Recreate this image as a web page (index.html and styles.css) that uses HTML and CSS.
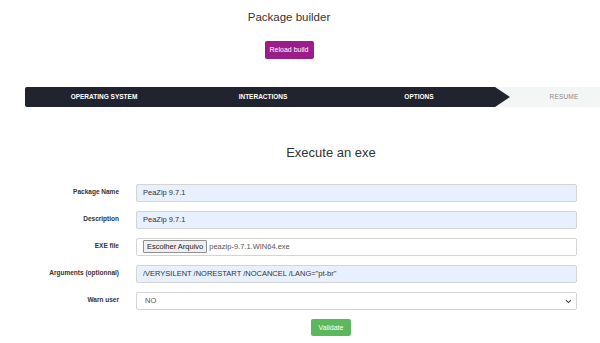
FILE: index.html
```html
<!DOCTYPE html>
<html lang="en">
<head>
  <meta charset="UTF-8">
  <meta name="viewport" content="width=device-width, initial-scale=1.0">
  <title>Package builder</title>
  <link rel="stylesheet" href="styles.css">
</head>
<body>
  <!-- header -->
  <header class="page-head">
    <h1>Package builder</h1>
    <button class="btn btn-reload" type="button">Reload build</button>
  </header>

  <!-- steps -->
  <ol class="steps">
    <li class="step done">OPERATING SYSTEM</li>
    <li class="step done">INTERACTIONS</li>
    <li class="step done last">OPTIONS</li>
    <li class="step todo">RESUME</li>
  </ol>

  <!-- form -->
  <main class="form-section">
    <h2 class="shifted">Execute an exe</h2>
    <form class="form-grid">
      <label for="pkg-name">Package Name</label>
      <input id="pkg-name" class="field filled" type="text" value="PeaZip 9.7.1">

      <label for="pkg-desc">Description</label>
      <input id="pkg-desc" class="field filled" type="text" value="PeaZip 9.7.1">

      <label>EXE file</label>
      <div class="field file-field">
        <span class="file-btn">Escolher Arquivo</span>
        <span class="file-name">peazip-9.7.1.WIN64.exe</span>
      </div>

      <label for="pkg-args">Arguments (optionnal)</label>
      <input id="pkg-args" class="field filled" type="text" value='/VERYSILENT /NORESTART /NOCANCEL /LANG="pt-br"'>

      <label for="warn">Warn user</label>
      <div class="select-wrap">
        <select id="warn" class="field">
          <option>NO</option>
          <option>YES</option>
        </select>
        <svg class="chevron" width="7" height="5" viewBox="0 0 7 5" aria-hidden="true">
          <path d="M1 1.2 L3.5 3.6 L6 1.2" fill="none" stroke="#444" stroke-width="1.1"/>
        </svg>
      </div>
    </form>
    <div class="shifted">
      <button class="btn btn-validate" type="button">Validate</button>
    </div>
  </main>
</body>
</html>
```

FILE: styles.css
```css
/* global */
body {
  font-family: "Liberation Sans", Arial, sans-serif;
  margin: 0;
  padding: 0;
  color: #333;
  background-color: #fff;
}

/* header */
.page-head {
  text-align: center;
  padding: 10px 22px 0 0;
}
.page-head h1 {
  font-size: 11.5px;
  font-weight: normal;
  line-height: 14px;
  margin: 0 0 14px;
}
.btn {
  font-family: inherit;
  border: none;
  border-radius: 2px;
  color: #fff;
  cursor: pointer;
  padding: 0;
}
.btn-reload {
  background-color: #9b1d89;
  font-size: 7px;
  width: 49px;
  height: 18px;
}

/* steps */
.steps {
  list-style: none;
  display: flex;
  margin: 28px 0 0 25px;
  padding: 0;
  height: 20px;
  background-color: #f4f5f5;
}
.step {
  display: flex;
  align-items: center;
  justify-content: center;
  font-size: 6.5px;
  font-weight: bold;
}
.step.done {
  background-color: #21232f;
  color: #fff;
  width: 160px;
}
.step.done:first-child {
  width: 158px;
  border-radius: 2px 0 0 2px;
}
.step.last {
  width: 152px;
  position: relative;
}
.step.last::after {
  content: "";
  position: absolute;
  top: 0;
  right: -15px;
  border-style: solid;
  border-width: 10px 0 10px 15px;
  border-color: transparent transparent transparent #21232f;
}
.step.todo {
  flex: 1;
  color: #8a8a8a;
  font-weight: normal;
  padding-left: 33px;
  letter-spacing: 0.2px;
}

/* form */
.form-section {
  padding-top: 38px;
}
.shifted {
  text-align: center;
  padding-left: 62px;
}
.form-section h2 {
  font-size: 13px;
  font-weight: normal;
  line-height: 16px;
  margin: 0 0 23px;
}
.form-grid {
  display: grid;
  grid-template-columns: 119px 441px;
  column-gap: 17px;
  row-gap: 9px;
  align-items: center;
}
.form-grid label {
  text-align: right;
  font-size: 6.5px;
  font-weight: bold;
  color: #333;
  padding-bottom: 2px;
}
.field {
  box-sizing: border-box;
  height: 18px;
  margin: 0;
  border: 1px solid #d4d4d4;
  border-radius: 2px;
  padding: 0 6px;
  font-family: inherit;
  font-size: 7.5px;
  color: #333;
  background-color: #fff;
}
.field.filled {
  background-color: #e8f0fe;
}
.file-field {
  display: flex;
  align-items: center;
  gap: 2px;
}
.file-btn {
  border: 1px solid #8f8f8f;
  border-radius: 1px;
  background-color: #efefef;
  color: #222;
  padding: 1px 3px;
  line-height: 9px;
}
.file-name {
  color: #555;
}
.select-wrap {
  position: relative;
  display: flex;
}
.select-wrap select {
  flex: 1;
  appearance: none;
  -webkit-appearance: none;
  padding-left: 8px;
  color: #555;
}
.chevron {
  position: absolute;
  right: 5px;
  top: 7px;
  pointer-events: none;
}
.btn-validate {
  background-color: #5cb85c;
  font-size: 7px;
  width: 40px;
  height: 17px;
  margin-top: 9px;
}
```
